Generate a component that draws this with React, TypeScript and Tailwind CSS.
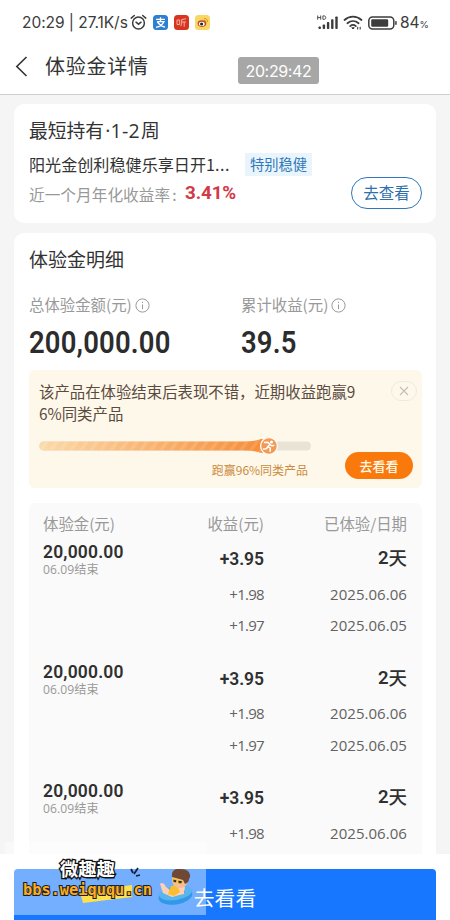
import React from "react";

const CJK = "font-['Noto_Sans_CJK_SC',sans-serif]";
const NUM = "font-[Roboto,'Noto_Sans_CJK_SC',sans-serif]";
const LATIN = "font-['Open_Sans','Noto_Sans_CJK_SC',sans-serif]";

function StatusBar() {
  return (
    <header className="flex h-[45px] items-center pl-[22px] text-[#3c3c3c]">
      <span className="w-[107px] whitespace-nowrap font-[Inter,sans-serif] text-[15.5px] tracking-[-0.05px]">20:29 | 27.1K/s</span>
      <svg className="ml-[1px] shrink-0" width="17" height="17" viewBox="0 0 17 17" fill="none" stroke="currentColor" strokeWidth="1.5" strokeLinecap="round">
        <circle cx="8.5" cy="9" r="5.9" />
        <path d="M1.2 4.1 4.3 1.5M15.8 4.1 12.7 1.5M6 8.2l2.5 2 2.6-2" />
      </svg>
      <svg className="ml-[6px] shrink-0" width="15" height="15" viewBox="0 0 15 15">
        <rect width="15" height="15" rx="3.5" fill="#2e7fd2" />
        <path d="M3 4.4h9M7.5 2.2v4.3M4 6.6h7C9.5 10 6.5 11.8 3 12.3M4.5 7.2c1.8 2.6 4.4 4.2 7.5 5" stroke="#fff" strokeWidth="1.35" fill="none" />
      </svg>
      <svg className="ml-[6px] shrink-0" width="15" height="15" viewBox="0 0 15 15">
        <rect width="15" height="15" rx="3.5" fill="#d93420" />
        <path d="M3 5h2.7v4.5H3zM12 3.8 7.7 4.5v3.3c0 1.4-.3 2.5-1 3.4M7.8 7H12M10.2 7v4.7" stroke="#f3b0a0" strokeWidth="1" fill="none" />
      </svg>
      <svg className="ml-[6px] shrink-0" width="15" height="15" viewBox="0 0 15 15">
        <rect width="15" height="15" rx="3.5" fill="#f8d763" />
        <ellipse cx="7" cy="8.6" rx="4.3" ry="3.3" fill="#b84a25" />
        <ellipse cx="6.8" cy="8.9" rx="2.9" ry="2.1" fill="#fff" />
        <circle cx="6.6" cy="9" r="1.6" fill="#33251b" />
        <path d="M9.2 3.6c2.2-.4 3.7 1.1 3.2 3.2M9.3 5.4c1-.2 1.6.4 1.4 1.3" stroke="#e58a20" fill="none" strokeLinecap="round" />
      </svg>
      <svg className="ml-[107px] shrink-0" width="22" height="15" viewBox="0 0 22 15" fill="currentColor">
        <path d="M.7.5v4.2M3.7.5v4.2M.7 2.6h3M5.9.9v3.4H7c2.4 0 2.4-3.4 0-3.4z" fill="none" stroke="currentColor" strokeWidth=".9" />
        <rect x="1.5" y="11.5" width="2.4" height="2.5" rx=".7" />
        <rect x="5.7" y="9.5" width="2.4" height="4.5" rx=".7" />
        <rect x="9.9" y="7" width="2.4" height="7" rx=".7" />
        <rect x="14.1" y="4.3" width="2.4" height="9.7" rx=".7" />
        <rect x="18.3" y="1.5" width="2.4" height="12.5" rx=".7" />
      </svg>
      <svg className="ml-[4px] shrink-0" width="20" height="15" viewBox="0 0 20 15" fill="none" stroke="currentColor" strokeWidth="1.8" strokeLinecap="round">
        <path d="M1.5 5c4.8-4.4 12.2-4.4 17 0M4.4 8.2c3.3-2.9 7.9-2.9 11.2 0M7.2 11.1c1.7-1.5 3.9-1.5 5.6 0" />
        <path d="m9 13 1 1 1-1z" fill="currentColor" strokeWidth="1" />
        <path d="M14.7 14v-1.7M17.2 12.3V14" strokeWidth="1.1" />
      </svg>
      <svg className="ml-[5px] shrink-0" width="29" height="14" viewBox="0 0 29 14">
        <rect x=".8" y="1" width="25" height="12" rx="3.8" fill="none" stroke="currentColor" strokeWidth="1.5" />
        <rect x="3.2" y="3.3" width="17" height="7.4" rx="1.3" fill="currentColor" />
        <rect x="27.2" y="5" width="1.5" height="4" rx=".7" fill="currentColor" />
      </svg>
      <span className="ml-[3px] whitespace-nowrap font-[Inter,sans-serif] text-[15.5px]">84<span className="text-[9.5px]">%</span></span>
    </header>
  );
}

function TitleBar() {
  return (
    <div className="flex h-[50px] border-b border-[#cfcfcf] pl-[15px]">
      <svg className="mt-[11px] shrink-0" width="13" height="21" viewBox="0 0 13 21" fill="none" stroke="#333" strokeWidth="1.6">
        <path d="M11.5 1 1.8 10.5l9.7 9.5" />
      </svg>
      <h1 className="ml-[17px] mt-[6px] h-[30px] w-[193px] text-[20px] leading-[29px] tracking-[0.75px] text-[#333]">体验金详情</h1>
      <div className="mt-[12px] flex h-[27px] w-[81px] items-center justify-center rounded-[3px] bg-[#a7a7a7] font-[Inter,sans-serif] text-[16px] tracking-[-0.35px] text-white">20:29:42</div>
    </div>
  );
}

function ProductCard() {
  return (
    <section className="mx-[14px] mt-[9px] h-[119px] rounded-[10px] bg-white px-[15px] pt-[12px]">
      <h2 className="h-7 whitespace-nowrap text-[18.8px] leading-7 text-[#333]">最短持有<span className="mx-[1px] font-['Open_Sans',sans-serif] text-[19.5px] tracking-[0.3px]">·1-2</span>周</h2>
      <div className="mt-[8px] flex h-[24px] items-center">
        <span className="w-[216px] whitespace-nowrap text-[16.1px] text-[#333]">阳光金创利稳健乐享日开1<span className="tracking-[0.6px]">...</span></span>
        <span className="flex h-[23px] w-[67px] items-center justify-center bg-[#eaf4fd] text-[14.3px] text-[#2e79b8]">特别稳健</span>
      </div>
      <div className="mt-[4px] flex h-[28px]">
        <span className="w-[156px] whitespace-nowrap text-[15.7px] leading-[29px] text-[#999]">近一个月年化收益率<span className="ml-[2px]">:</span></span>
        <b className={`${NUM} text-[18.8px] font-bold leading-[27px] tracking-[-0.1px] text-[#d13a46]`}>3.41%</b>
        <button className="-mt-[3px] ml-auto -mr-[1px] flex h-[32px] w-[71px] items-center justify-center rounded-full border border-[#2f78bd] text-[15.5px] text-[#2e70ad]">去查看</button>
      </div>
    </section>
  );
}

function Info() {
  return (
    <svg className="shrink-0" width="15" height="15" viewBox="0 0 15 15" fill="none" stroke="#999" strokeWidth="1">
      <circle cx="7.5" cy="7.5" r="6.6" />
      <path d="M7.5 6.5v4.7M7.5 3.8V5" />
    </svg>
  );
}

function Stat({ label, value }: { label: string; value: string }) {
  return (
    <div className="w-[212px] shrink-0">
      <div className="flex h-[24px] items-center gap-[3px] whitespace-nowrap text-[15.4px] text-[#999]">{label}<Info /></div>
      <div className={`${NUM} mt-[8px] h-[36px] w-fit origin-left scale-x-[0.9] text-[30.5px] font-semibold leading-[36px] tracking-[0.2px] text-[#2c2c2c]`}>{value}</div>
    </div>
  );
}

function Promo() {
  return (
    <div className="mt-[9px] flex h-[118px] flex-col rounded-[6px] bg-[#fef8ea] pl-[10px] pr-[5px]">
      <div className="flex pt-[11px]">
        <p className="w-[325px] text-[15.4px] leading-[21.5px] text-[#5b4b3f]">该产品在体验结束后表现不错，近期收益跑赢9<br />6%同类产品</p>
        <span className="ml-auto flex h-[20px] w-[26px] items-center justify-center rounded-full border border-[#eeeae0]">
          <svg width="10" height="10" viewBox="0 0 10 10" stroke="#c5c0b7" strokeWidth="1.2"><path d="m1 1 8 8M9 1 1 9" /></svg>
        </span>
      </div>
      <div className="flex flex-1">
        <div className="w-[272px] pt-[12px]">
          <svg className="block" width="272" height="20" viewBox="0 0 272 20">
            <defs>
              <linearGradient id="progress"><stop stopColor="#fbdaaa" /><stop offset="1" stopColor="#f68b36" /></linearGradient>
              <pattern id="stripes" width="10" height="10" patternUnits="userSpaceOnUse" patternTransform="skewX(-35)"><rect width="4" height="10" fill="#fff" opacity=".12" /></pattern>
            </defs>
            <rect y="5.5" width="272" height="9" rx="4.5" fill="#e8e3d5" />
            <path d="M5 5.5H205Q217 5.2 222 3H230V17H222Q217 14.8 205 14.5H5A4.5 4.5 0 0 1 5 5.5Z" fill="url(#progress)" />
            <path d="M5 5.5H205Q217 5.2 222 3H230V17H222Q217 14.8 205 14.5H5A4.5 4.5 0 0 1 5 5.5Z" fill="url(#stripes)" />
            <circle cx="230" cy="10" r="8.4" fill="#f19a58" stroke="#fffaf0" strokeWidth="1.4" />
            <circle cx="232.5" cy="6" r="1.5" fill="#fff" />
            <path d="m225.5 6.5 3.3-.3 2.1 2-2 2.3 2.4 1.7-.2 3M228.8 10.7l-1.5 2-2.7.3M230.8 8.2l1.8 1.6 2.2-.4" stroke="#fff" strokeWidth="1.5" fill="none" strokeLinecap="round" strokeLinejoin="round" />
          </svg>
          <p className="mt-[4px] whitespace-nowrap pr-[3px] text-right text-[12px] leading-[20px] tracking-[-0.02px] text-[#cc8b40]">跑赢96%同类产品</p>
        </div>
        <button className="ml-auto mr-[4px] mt-[28px] flex h-[27px] w-[68px] items-center justify-center rounded-full bg-[#fa790c] text-[13px] font-medium text-[#fff9e8]">去看看</button>
      </div>
    </div>
  );
}

const allDays = [["+1.98", "2025.06.06"], ["+1.97", "2025.06.05"]];
const records = [allDays, allDays, allDays.slice(0, 1)];

function Record({ days }: { days: string[][] }) {
  return (
    <div className="h-[119.5px] shrink-0">
      <div className="flex h-[37px]">
        <div className="w-[121px]">
          <div className={`${NUM} h-[21px] w-fit origin-left scale-x-[0.92] text-[19px] font-semibold leading-[22px] tracking-[0.2px] text-[#303030]`}>20,000.00</div>
          <div className={`${LATIN} h-[16px] text-[12.1px] leading-[15px] tracking-[0.1px] text-[#999]`}>06.09结束</div>
        </div>
        <div className="flex w-[100px] justify-end pt-[6px]"><span className={`${NUM} origin-right scale-x-[0.92] text-[19px] font-semibold leading-[23px] tracking-[-0.1px] text-[#303030]`}>+3.95</span></div>
        <div className="flex flex-1 justify-end pt-[5px] text-[18.5px] leading-[23px] text-[#303030]"><span className={`${NUM} pt-px font-semibold`}>2</span><span className="font-medium">天</span></div>
      </div>
      {days.map(([gain, date]) => (
        <div key={date} className={`${LATIN} flex h-[31.5px] items-center text-[15px] text-[#626262]`}>
          <span className="w-[221px] text-right tracking-[-0.7px]">{gain}</span>
          <span className="flex-1 text-right tracking-[0.05px]">{date}</span>
        </div>
      ))}
    </div>
  );
}

function Details() {
  return (
    <section className="mx-[14px] mt-[10px] h-[621px] overflow-hidden rounded-t-[10px] bg-white pl-[15px] pr-[14px] pt-[12px]">
      <h2 className="h-[28px] text-[19px] leading-[28px] text-[#333]">体验金明细</h2>
      <div className="mt-[20px] flex"><Stat label="总体验金额(元)" value="200,000.00" /><Stat label="累计收益(元)" value="39.5" /></div>
      <Promo />
      <div className="mt-[15px] flex h-[351px] flex-col overflow-hidden rounded-t-[6px] bg-[#fafafa] pl-[14px] pr-[15px] pt-[9px]">
        <div className="flex h-[29px] shrink-0 text-[15.4px] leading-[23px] text-[#999]">
          <span className="w-[121px]">体验金(元)</span><span className="w-[100px] text-right">收益(元)</span><span className="flex-1 text-right">已体验/日期</span>
        </div>
        {records.map((days, i) => <Record key={i} days={days} />)}
      </div>
    </section>
  );
}

function Watermark() {
  return (
    <div className="absolute left-[5px] top-[-12px] h-[73px] w-[201px] bg-white/40">
      <div className="absolute left-[55px] top-[14px] whitespace-nowrap text-[18.3px] font-bold leading-[24px] text-white [-webkit-text-stroke:2.6px_#111] [paint-order:stroke_fill]">微趣趣</div>
      <svg className="absolute left-[125px] top-[25px]" width="12" height="12" viewBox="0 0 12 12" stroke="#18213a" strokeWidth="1.8"><path d="m1 2 2 4M8 1 4 7M6 9l4-1" /></svg>
      <svg className="absolute left-[75px] top-[43px]" width="52" height="20" viewBox="0 0 52 20"><path d="M0 7 52 0v12L3 18z" fill="#ffe14e" /></svg>
      <div className="absolute left-[18px] top-[37px] whitespace-nowrap font-['DejaVu_Sans_Mono',monospace] text-[15.3px] font-bold leading-[22px] text-[#ffad19] [-webkit-text-stroke:2px_#18202c] [paint-order:stroke_fill]">bbs.weiququ.cn</div>
      <svg className="absolute left-[152px] top-[27px]" width="37" height="37" viewBox="0 0 37 37">
        <ellipse cx="18.5" cy="27" rx="17" ry="8.5" fill="#3298e8" transform="rotate(-9 18.5 27)" />
        <ellipse cx="18.5" cy="24" rx="16.5" ry="7" fill="#58b5f0" transform="rotate(-9 18.5 24)" />
        <ellipse cx="19" cy="22.5" rx="9" ry="4" fill="#297fca" />
        <path d="M3 15q3-3 6 3l4 3 5-6 10 3-1 7-12 3-9-4z" fill="#ffd0b4" />
        <path d="m14 17 6-1 3 7-6 4-6-2z" fill="#f9bf31" />
        <circle cx="23" cy="11" r="8" fill="#f8bd97" />
        <path d="M15 8C14 1 19-1 24 0c8 0 11 6 8 10 0 3-2 4-4 5l-2-4-11-3z" fill="#704936" />
        <path d="m15 9 11 3M16 10l4 1-1 3-3-1zm5 1 5 1-2 3-3-1z" fill="#31322f" stroke="#f7cb34" strokeWidth=".8" />
      </svg>
    </div>
  );
}

export default function App() {
  return (
    <main className={`${CJK} flex h-[920px] w-[450px] flex-col overflow-hidden bg-[#f5f5f5]`}>
      <div className="h-[95px] shrink-0 bg-white"><StatusBar /><TitleBar /></div>
      <ProductCard />
      <Details />
      <footer className="relative h-[66px] shrink-0 bg-white px-[14px] pt-[15px]">
        <Watermark />
        <button className="flex h-[58px] w-[422px] items-center justify-center rounded-[4px] bg-[#1778ff] text-[20.8px] text-white">去看看</button>
      </footer>
    </main>
  );
}
